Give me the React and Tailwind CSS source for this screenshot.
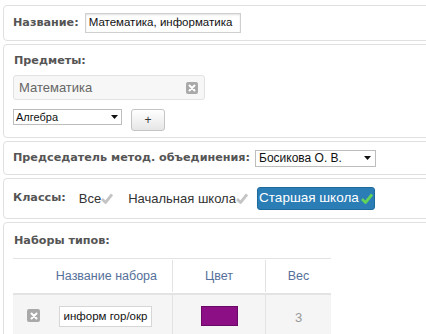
import React from "react";

const label = "font-['DejaVu_Sans',sans-serif] font-bold text-[11.2px] text-[#555555]";
const sans = "font-['Liberation_Sans',Arial,sans-serif]";

function XIcon({ className = "" }) {
  return (
    <span className={`inline-flex items-center justify-center rounded-[2px] bg-[#a9a9a9] ${className}`}>
      <svg width="8" height="8" viewBox="0 0 8 8">
        <path d="M1.5 1.5 L6.5 6.5 M6.5 1.5 L1.5 6.5" stroke="#fff" strokeWidth="2" strokeLinecap="round" />
      </svg>
    </span>
  );
}

function Check({ color }) {
  return (
    <svg width="12" height="11" viewBox="0 0 12 11" className="inline-block">
      <path d="M1 6 L4.5 9.5 L11 1.5" stroke={color} strokeWidth="2.8" fill="none" strokeLinejoin="round" />
    </svg>
  );
}

function Caret() {
  return (
    <svg width="7" height="4" viewBox="0 0 7 4">
      <path d="M0 0 L7 0 L3.5 4 Z" fill="#111" />
    </svg>
  );
}

function Panel({ className = "", children }) {
  return (
    <div className={`border border-[#e0e0e0] rounded-[4px] bg-white px-[9px] ${className}`}>{children}</div>
  );
}

export default function App() {
  return (
    <div className="w-[426px] h-[334px] overflow-hidden bg-white">
      <div className="w-[440px] ml-[3px] pt-[5px] flex flex-col gap-[3px]">
        <Panel className="h-[36px] flex items-center gap-[6px]">
          <span className={label}>Название:</span>
          <div className={`${sans} h-[20px] w-[156px] border border-[#cfcfcf] shadow-[inset_0_1px_2px_rgba(0,0,0,0.12)] flex items-center px-[3px] text-[11.5px] text-[#111] whitespace-nowrap overflow-hidden`}>
            Математика, информатика
          </div>
        </Panel>

        <Panel className="h-[94px] pt-[8px] px-[8px]">
          <div className={`${label} leading-[16px] pl-[1px]`}>Предметы:</div>
          <div className={`${sans} mt-[6px] h-[25px] w-[192px] border border-[#e2e2e2] rounded-[3px] bg-[#f7f7f7] flex items-center justify-between pl-[5px] pr-[6px] text-[13px] text-[#666]`}>
            <span>Математика</span>
            <XIcon className="w-[12px] h-[12px]" />
          </div>
          <div className="mt-[9px] flex items-start gap-[9px]">
            <div className={`${sans} h-[16px] w-[109px] border border-[#bdbdbd] bg-white flex items-center justify-between pl-[2px] pr-[3px] text-[11px] text-[#111]`}>
              <span>Алгебра</span>
              <Caret />
            </div>
            <div className={`${sans} h-[22px] w-[34px] border border-[#c4c4c4] rounded-[3px] bg-gradient-to-b from-white to-[#e6e6e6] flex items-center justify-center text-[12px] text-[#333]`}>
              +
            </div>
          </div>
        </Panel>

        <Panel className="h-[34px] flex items-center gap-[5px]">
          <span className={label}>Председатель метод. объединения:</span>
          <div className={`${sans} h-[17px] w-[121px] border border-[#bdbdbd] bg-white flex items-center justify-between pl-[3px] pr-[4px] text-[12px] text-[#111]`}>
            <span>Босикова О. В.</span>
            <Caret />
          </div>
        </Panel>

        <Panel className="h-[41px] flex items-center">
          <span className={label}>Классы:</span>
          <span className={`${sans} ml-[13px] flex items-center text-[13px] text-[#333]`}>
            Все<Check color="#c4c4c4" />
          </span>
          <span className={`${sans} ml-[15px] flex items-center text-[13px] text-[#333]`}>
            Начальная школа<Check color="#c4c4c4" />
          </span>
          <span className={`${sans} ml-[9px] h-[23px] w-[118px] rounded-[3px] bg-[#2a7db5] border border-[#1f6a9c] flex items-center justify-center gap-[2px] text-[13.5px] text-white`}>
            Старшая школа<Check color="#62d35a" />
          </span>
        </Panel>

        <Panel className="h-[120px] pt-[10px] px-[8px]">
          <div className={`${label} leading-[16px] pl-[1px]`}>Наборы типов:</div>
          <div className={`${sans} mt-[9px] w-[318px] border-t border-[#e3e3e3] text-[13px]`}>
            <div className="flex h-[36px] border-b-2 border-[#e3e3e3] text-[#55709a]">
              <div className="w-[159px] flex items-center justify-end pr-[15px] text-[12.5px]">Название набора</div>
              <div className="w-[93px] border-l border-[#e3e3e3] my-[1px] flex items-center justify-center text-[12.5px]">Цвет</div>
              <div className="flex-1 border-l border-[#e3e3e3] my-[1px] flex items-center justify-center text-[12.5px]">Вес</div>
            </div>
            <div className="flex h-[50px] bg-[#f5f5f5]">
              <div className="w-[159px] flex items-start pt-[11px] pl-[14px]">
                <XIcon className="w-[13px] h-[13px] mt-[3px]" />
                <div className="ml-[19px] h-[21px] w-[93px] border border-[#d6d6d6] bg-white flex items-center justify-center text-[11.5px] text-[#111]">
                  информ гор/окр
                </div>
              </div>
              <div className="w-[93px] border-l border-[#e3e3e3] flex items-start justify-center pt-[11px]">
                <div className="w-[37px] h-[20px] bg-[#8c0f86] border border-[#6a0a66]" />
              </div>
              <div className="flex-1 border-l border-[#e3e3e3] flex items-start justify-center pt-[13px] text-[#999]">3</div>
            </div>
          </div>
        </Panel>
      </div>
    </div>
  );
}
